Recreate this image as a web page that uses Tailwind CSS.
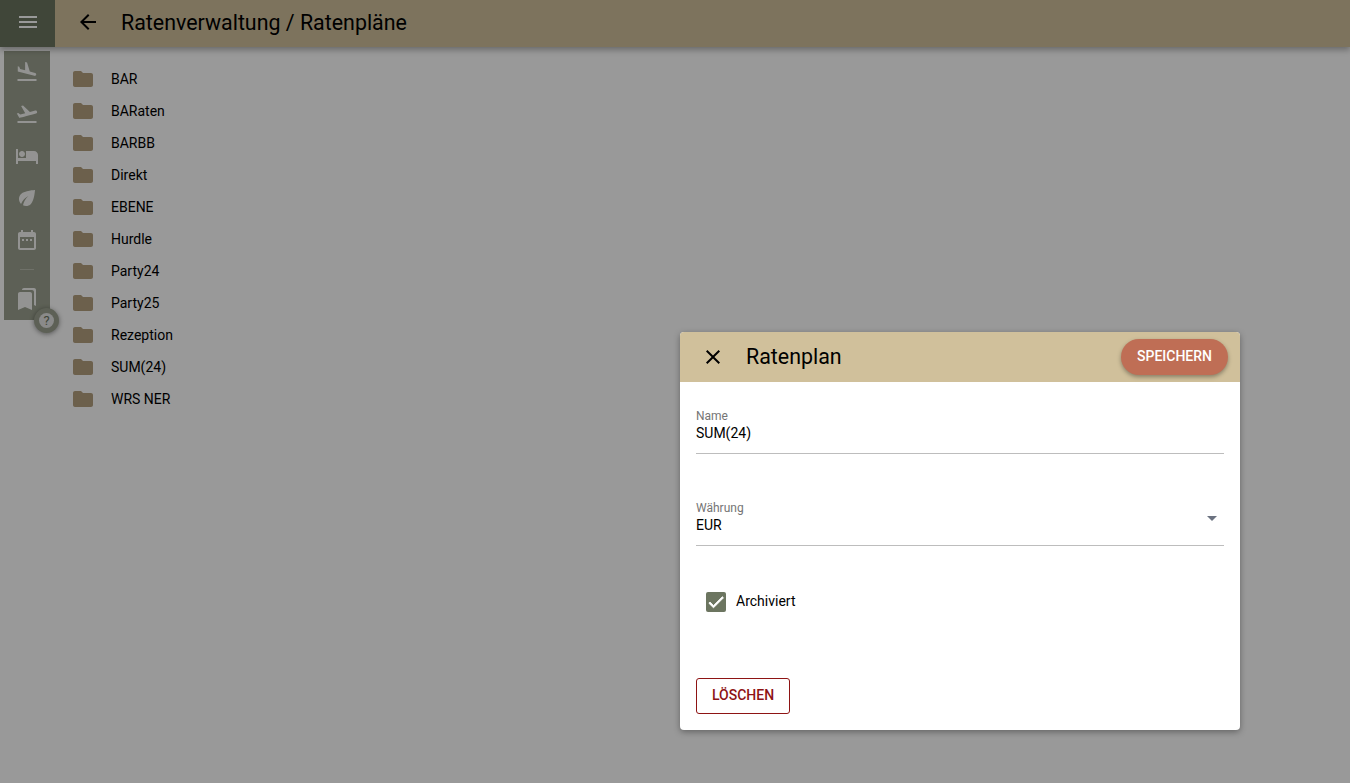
<!DOCTYPE html>
<html lang="de">
<head>
  <meta charset="UTF-8" />
  <title>Ratenpläne</title>
  <script src="https://cdn.jsdelivr.net/npm/@tailwindcss/browser@4"></script>
</head>
<body class="relative h-[783px] w-[1350px] overflow-hidden bg-white font-['Roboto',sans-serif] text-black">

  <!-- Kopfzeile -->
  <header class="relative z-10 flex h-[47px] items-center bg-[#d0c09b] shadow-[0_3px_6px_rgba(0,0,0,0.3)]">
    <button class="flex h-[47px] w-[55px] items-center justify-center bg-[#6c7560] pb-[3px]">
      <svg class="h-6 w-6" viewBox="0 0 24 24" fill="#fff"><path d="M3 18h18v-2H3v2zm0-5h18v-2H3v2zm0-7v2h18V6H3z"/></svg>
    </button>
    <div class="flex items-center pb-[3px]">
      <svg class="ml-[21px] h-6 w-6" viewBox="0 0 24 24" fill="#000"><path d="M20 11H7.83l5.59-5.59L12 4l-8 8 8 8 1.41-1.41L7.83 13H20v-2z"/></svg>
      <h1 class="ml-[21px] pt-[2px] text-[21.4px]">Ratenverwaltung / Ratenpläne</h1>
    </div>
  </header>

  <div class="flex">
    <!-- Seitenleiste -->
    <aside class="relative ml-1 mt-1 h-[269px] w-[46px] bg-[#9ba18f]">
      <div class="flex flex-col items-center pt-[9px] text-white">
        <svg class="h-6 w-6" viewBox="0 0 24 24" fill="#fff" fill-opacity="0.9"><path d="M2.5 19h19v2h-19v-2zm16.84-3.15c.8.21 1.62-.26 1.84-1.06.21-.8-.26-1.62-1.06-1.84l-5.31-1.42-2.76-9.02L10.12 2v8.28L5.15 8.95l-.93-2.32-1.45-.39v5.17l16.57 4.44z"/></svg>
        <svg class="mt-[18px] h-6 w-6" viewBox="0 0 24 24" fill="#fff" fill-opacity="0.9"><path d="M2.5 19h19v2h-19v-2zm19.57-9.36c-.21-.8-1.04-1.28-1.84-1.06L14.92 10l-6.9-6.43-1.93.51 4.14 7.17-4.97 1.33-1.97-1.54-1.45.39 2.59 4.49s7.12-1.9 16.57-4.43c.81-.23 1.28-1.05 1.07-1.85z"/></svg>
        <svg class="mt-[18px] h-6 w-6" viewBox="0 0 24 24" fill="#fff" fill-opacity="0.9"><path d="M7 13c1.66 0 3-1.34 3-3S8.66 7 7 7s-3 1.34-3 3 1.34 3 3 3zm12-6h-8v7H3V5H1v15h2v-3h18v3h2v-9c0-2.21-1.79-4-4-4z"/></svg>
        <svg class="mt-[18px] h-6 w-6" viewBox="0 0 24 24" fill="#fff" fill-opacity="0.9"><path d="M6.05 8.05c-2.73 2.73-2.73 7.15-.02 9.88 1.47-3.4 4.09-6.24 7.36-7.93-2.77 2.34-4.71 5.61-5.39 9.32 2.6 1.23 5.8.78 7.95-1.37C19.43 14.47 20 4 20 4S9.53 4.57 6.05 8.05z"/></svg>
        <svg class="mt-[18px] h-6 w-6" viewBox="0 0 24 24" fill="#fff" fill-opacity="0.9"><path d="M9 11H7v2h2v-2zm4 0h-2v2h2v-2zm4 0h-2v2h2v-2zm2-7h-1V2h-2v2H8V2H6v2H5c-1.11 0-1.99.9-1.99 2L3 20c0 1.1.89 2 2 2h14c1.1 0 2-.9 2-2V6c0-1.1-.9-2-2-2zm0 16H5V9h14v11z"/></svg>
        <div class="mt-[17px] h-px w-[14px] bg-white/30"></div>
        <svg class="mt-[17px] h-6 w-6" viewBox="0 0 24 24" fill="#fff" fill-opacity="0.9"><path d="M19 18l2 1V3c0-1.1-.9-2-2-2H8.99C7.89 1 7 1.9 7 3h10c1.1 0 2 .9 2 2v13zM15 5H5c-1.1 0-2 .9-2 2v16l7-3 7 3V7c0-1.1-.9-2-2-2z"/></svg>
      </div>
      <button class="absolute left-[30px] top-[257px] flex h-[25px] w-[25px] items-center justify-center rounded-full bg-[#9ba18f] shadow-[0_1px_5px_rgba(0,0,0,0.45)]">
        <span class="flex h-[15px] w-[15px] items-center justify-center rounded-full bg-[#e6e6e6] text-[13px] text-[#6c7560]">?</span>
      </button>
    </aside>

    <!-- Ordnerliste -->
    <ul class="ml-[21px] mt-4 text-sm">
      <li class="flex h-8 items-center"><svg class="h-6 w-6" viewBox="0 0 24 24" fill="#b4a07f"><path d="M10 4H4c-1.1 0-1.99.9-1.99 2L2 18c0 1.1.9 2 2 2h16c1.1 0 2-.9 2-2V8c0-1.1-.9-2-2-2h-8l-2-2z"/></svg><span class="ml-4">BAR</span></li>
      <li class="flex h-8 items-center"><svg class="h-6 w-6" viewBox="0 0 24 24" fill="#b4a07f"><path d="M10 4H4c-1.1 0-1.99.9-1.99 2L2 18c0 1.1.9 2 2 2h16c1.1 0 2-.9 2-2V8c0-1.1-.9-2-2-2h-8l-2-2z"/></svg><span class="ml-4">BARaten</span></li>
      <li class="flex h-8 items-center"><svg class="h-6 w-6" viewBox="0 0 24 24" fill="#b4a07f"><path d="M10 4H4c-1.1 0-1.99.9-1.99 2L2 18c0 1.1.9 2 2 2h16c1.1 0 2-.9 2-2V8c0-1.1-.9-2-2-2h-8l-2-2z"/></svg><span class="ml-4">BARBB</span></li>
      <li class="flex h-8 items-center"><svg class="h-6 w-6" viewBox="0 0 24 24" fill="#b4a07f"><path d="M10 4H4c-1.1 0-1.99.9-1.99 2L2 18c0 1.1.9 2 2 2h16c1.1 0 2-.9 2-2V8c0-1.1-.9-2-2-2h-8l-2-2z"/></svg><span class="ml-4">Direkt</span></li>
      <li class="flex h-8 items-center"><svg class="h-6 w-6" viewBox="0 0 24 24" fill="#b4a07f"><path d="M10 4H4c-1.1 0-1.99.9-1.99 2L2 18c0 1.1.9 2 2 2h16c1.1 0 2-.9 2-2V8c0-1.1-.9-2-2-2h-8l-2-2z"/></svg><span class="ml-4">EBENE</span></li>
      <li class="flex h-8 items-center"><svg class="h-6 w-6" viewBox="0 0 24 24" fill="#b4a07f"><path d="M10 4H4c-1.1 0-1.99.9-1.99 2L2 18c0 1.1.9 2 2 2h16c1.1 0 2-.9 2-2V8c0-1.1-.9-2-2-2h-8l-2-2z"/></svg><span class="ml-4">Hurdle</span></li>
      <li class="flex h-8 items-center"><svg class="h-6 w-6" viewBox="0 0 24 24" fill="#b4a07f"><path d="M10 4H4c-1.1 0-1.99.9-1.99 2L2 18c0 1.1.9 2 2 2h16c1.1 0 2-.9 2-2V8c0-1.1-.9-2-2-2h-8l-2-2z"/></svg><span class="ml-4">Party24</span></li>
      <li class="flex h-8 items-center"><svg class="h-6 w-6" viewBox="0 0 24 24" fill="#b4a07f"><path d="M10 4H4c-1.1 0-1.99.9-1.99 2L2 18c0 1.1.9 2 2 2h16c1.1 0 2-.9 2-2V8c0-1.1-.9-2-2-2h-8l-2-2z"/></svg><span class="ml-4">Party25</span></li>
      <li class="flex h-8 items-center"><svg class="h-6 w-6" viewBox="0 0 24 24" fill="#b4a07f"><path d="M10 4H4c-1.1 0-1.99.9-1.99 2L2 18c0 1.1.9 2 2 2h16c1.1 0 2-.9 2-2V8c0-1.1-.9-2-2-2h-8l-2-2z"/></svg><span class="ml-4">Rezeption</span></li>
      <li class="flex h-8 items-center"><svg class="h-6 w-6" viewBox="0 0 24 24" fill="#b4a07f"><path d="M10 4H4c-1.1 0-1.99.9-1.99 2L2 18c0 1.1.9 2 2 2h16c1.1 0 2-.9 2-2V8c0-1.1-.9-2-2-2h-8l-2-2z"/></svg><span class="ml-4">SUM(24)</span></li>
      <li class="flex h-8 items-center"><svg class="h-6 w-6" viewBox="0 0 24 24" fill="#b4a07f"><path d="M10 4H4c-1.1 0-1.99.9-1.99 2L2 18c0 1.1.9 2 2 2h16c1.1 0 2-.9 2-2V8c0-1.1-.9-2-2-2h-8l-2-2z"/></svg><span class="ml-4">WRS NER</span></li>
    </ul>
  </div>

  <!-- Abdunklung -->
  <div class="absolute inset-0 z-20 bg-black/40"></div>

  <!-- Dialog -->
  <section class="absolute left-[680px] top-[332px] z-30 h-[398px] w-[560px] overflow-hidden rounded bg-white shadow-[0_2px_6px_rgba(0,0,0,0.35)]">
    <div class="flex h-[50px] items-center bg-[#d0c09b] pl-[21px] pr-3">
      <svg class="h-6 w-6" viewBox="0 0 24 24" fill="#000"><path d="M19 6.41L17.59 5 12 10.59 6.41 5 5 6.41 10.59 12 5 17.59 6.41 19 12 13.41 17.59 19 19 17.59 13.41 12z"/></svg>
      <h2 class="ml-[21px] text-[21.4px]">Ratenplan</h2>
      <button class="ml-auto h-9 w-[107px] rounded-full bg-[#bf6e55] pb-[2px] text-sm font-medium text-white shadow-[0_2px_4px_rgba(0,0,0,0.35)]">SPEICHERN</button>
    </div>

    <div class="px-4">
      <div class="mt-[26px] h-[46px] border-b border-[#bdbdbd]">
        <div class="text-xs leading-[17px] text-[#757575]">Name</div>
        <div class="text-sm leading-[16px]">SUM(24)</div>
      </div>
      <div class="relative mt-[46px] h-[46px] border-b border-[#bdbdbd]">
        <div class="text-xs leading-[17px] text-[#757575]">Währung</div>
        <div class="text-sm leading-[16px]">EUR</div>
        <span class="absolute right-[7px] top-[16px] h-0 w-0 border-x-[5px] border-t-[5px] border-x-transparent border-t-[#6b7280]"></span>
      </div>
      <label class="ml-[10px] mt-[44px] flex items-center">
        <span class="mt-[2px] flex h-5 w-5 items-center justify-center rounded-[2px] bg-[#6c7560]">
          <svg class="h-5 w-5" viewBox="0 0 24 24" fill="#fff" stroke="#fff" stroke-width="1"><path d="M9 16.17L4.83 12l-1.42 1.41L9 19 21 7l-1.41-1.41z"/></svg>
        </span>
        <span class="ml-[10px] text-sm">Archiviert</span>
      </label>
      <button class="mt-[66px] h-9 w-[94px] rounded-[3px] border border-[#8e1414] pb-[2px] text-sm font-medium text-[#8e1414]">LÖSCHEN</button>
    </div>
  </section>
</body>
</html>
